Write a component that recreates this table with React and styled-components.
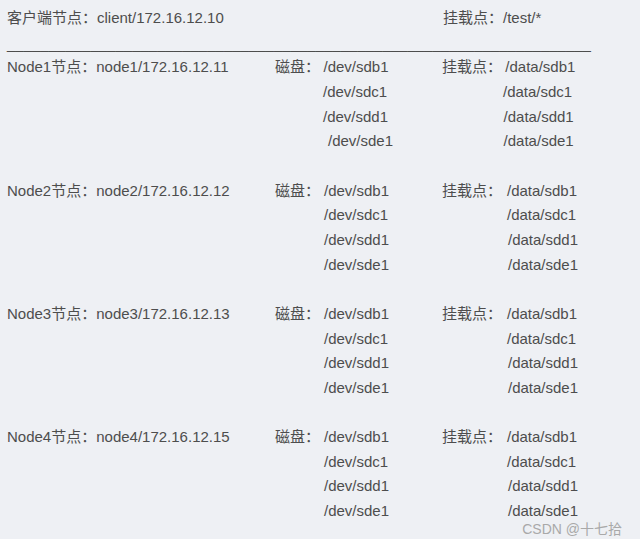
import React from 'react';
import styled, { createGlobalStyle } from 'styled-components';

const GlobalStyle = createGlobalStyle`
  html, body {
    margin: 0;
    padding: 0;
    background: #ffffff;
  }
`;

const Panel = styled.div`
  position: relative;
  width: 640px;
  height: 539px;
  box-sizing: border-box;
  padding-top: 6px;
  background: #eef0f4;
  color: #4d4d4d;
  font-family: "Liberation Sans", "Noto Sans CJK SC", sans-serif;
  font-size: 15px;
  line-height: 24.67px;
  overflow: hidden;
`;

const Line = styled.div`
  display: grid;
  grid-template-columns: 268px 45px 122px 60px 1fr;
  height: 24.67px;
  padding-left: 7px;
  white-space: nowrap;
`;

const Cell = styled.span`
  padding-left: ${p => p.$indent || 0}px;
`;

const Rule = styled.div`
  box-sizing: border-box;
  height: 24.67px;
  padding: 2px 0 0 7px;
  line-height: 22.67px;
  white-space: nowrap;
  overflow: hidden;
`;

const Group = styled.div`
  margin-bottom: 24.67px;
`;

const Watermark = styled.div`
  position: absolute;
  right: 18px;
  top: 521px;
  font-size: 14px;
  line-height: 16px;
  color: #a9a9a9;
`;

const nodes = [
  { name: 'Node1', host: 'node1/172.16.12.11', disk: [3.5, 3, 3, 8], mount: [3.3, 1, 1.6, 1.6] },
  { name: 'Node2', host: 'node2/172.16.12.12', disk: [4, 4, 4, 4], mount: [5, 5, 6, 6] },
  { name: 'Node3', host: 'node3/172.16.12.13', disk: [4, 4, 4, 4], mount: [5, 5, 6, 6] },
  { name: 'Node4', host: 'node4/172.16.12.15', disk: [4, 4, 4, 4], mount: [5, 5, 6, 6] },
];

const devs = ['sdb1', 'sdc1', 'sdd1', 'sde1'];

export default function App() {
  return (
    <>
      <GlobalStyle />
      <Panel>
        <Line>
          <Cell>客户端节点：client/172.16.12.10</Cell>
          <Cell />
          <Cell />
          <Cell $indent={1}>挂载点：</Cell>
          <Cell $indent={1}>/test/*</Cell>
        </Line>
        <Rule>{'_'.repeat(70)}</Rule>
        {nodes.map(node => (
          <Group key={node.name}>
            {devs.map((dev, i) => (
              <Line key={dev}>
                <Cell>{i === 0 ? `${node.name}节点：${node.host}` : ''}</Cell>
                <Cell>{i === 0 ? '磁盘：' : ''}</Cell>
                <Cell $indent={node.disk[i]}>/dev/{dev}</Cell>
                <Cell>{i === 0 ? '挂载点：' : ''}</Cell>
                <Cell $indent={node.mount[i]}>/data/{dev}</Cell>
              </Line>
            ))}
          </Group>
        ))}
        <Watermark>CSDN @十七拾</Watermark>
      </Panel>
    </>
  );
}
